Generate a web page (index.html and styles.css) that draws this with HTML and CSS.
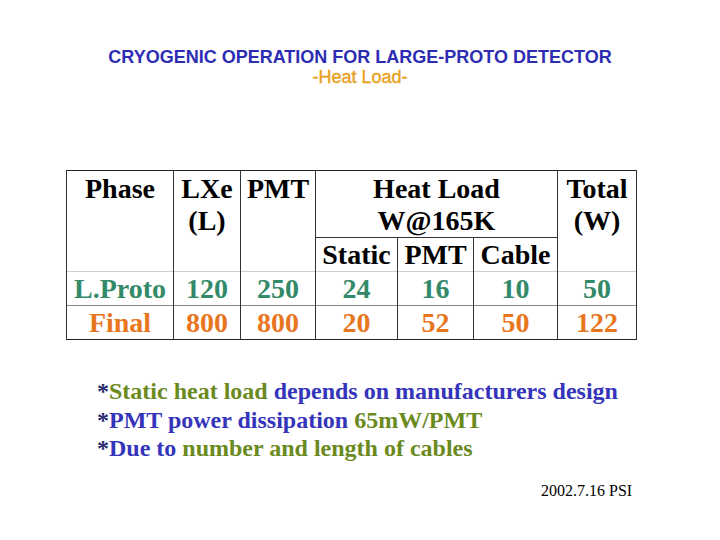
FILE: index.html
```html
<!DOCTYPE html>
<html>
<head>
<meta charset="utf-8">
<link rel="stylesheet" href="styles.css">
</head>
<body>
<div class="slide">
  <header class="title">
    <div class="title-main">CRYOGENIC OPERATION FOR LARGE-PROTO DETECTOR</div>
    <div class="title-sub">-Heat Load-</div>
  </header>
  <table class="load">
    <colgroup>
      <col class="c-phase"><col class="c-lxe"><col class="c-pmt"><col class="c-static"><col class="c-pmt2"><col class="c-cable"><col class="c-total">
    </colgroup>
    <tr class="head1">
      <th rowspan="2">Phase</th>
      <th rowspan="2">LXe<br>(L)</th>
      <th rowspan="2">PMT</th>
      <th colspan="3" class="heat">Heat Load<br>W@165K</th>
      <th rowspan="2">Total<br>(W)</th>
    </tr>
    <tr class="head2">
      <th>Static</th><th>PMT</th><th>Cable</th>
    </tr>
    <tr class="row proto">
      <td>L.Proto</td><td>120</td><td>250</td><td>24</td><td>16</td><td>10</td><td>50</td>
    </tr>
    <tr class="row final">
      <td>Final</td><td>800</td><td>800</td><td>20</td><td>52</td><td>50</td><td>122</td>
    </tr>
  </table>
  <div class="notes">
    <p><span class="star">*</span><span class="g">Static heat load</span> <span class="b">depends on manufacturers design</span></p>
    <p><span class="star">*</span><span class="b">PMT power dissipation</span> <span class="g">65mW/PMT</span></p>
    <p><span class="star">*</span><span class="b">Due to</span> <span class="g">number and length of cables</span></p>
  </div>
  <div class="date">2002.7.16 PSI</div>
</div>
</body>
</html>
```

FILE: styles.css
```css
html, body {
  margin: 0;
  padding: 0;
  background: #ffffff;
}
.slide {
  width: 720px;
  height: 540px;
  box-sizing: border-box;
  padding-top: 47px;
}
.title {
  text-align: center;
  font-family: "Liberation Sans", Arial, sans-serif;
  font-weight: bold;
}
.title-main {
  font-size: 18px;
  line-height: 20px;
  color: #2d2db4;
}
.title-sub {
  font-size: 18px;
  line-height: 20px;
  color: #e8a224;
  font-weight: normal;
  -webkit-text-stroke: 0.4px #e8a224;
  letter-spacing: 0;
}
.load {
  margin-top: 83px;
  margin-left: 66px;
  border-collapse: collapse;
  table-layout: fixed;
  width: 570px;
  font-family: "Liberation Serif", "Times New Roman", serif;
  font-weight: bold;
  font-size: 28px;
  border: 1px solid #222;
}
.c-phase { width: 107px; }
.c-lxe { width: 67px; }
.c-pmt { width: 75px; }
.c-static { width: 82px; }
.c-pmt2 { width: 76px; }
.c-cable { width: 84px; }
.c-total { width: 79px; }
.load th, .load td {
  border-left: 1px solid #333;
  border-right: 1px solid #333;
  padding: 0;
  text-align: center;
  line-height: 32px;
  color: #000;
  font-weight: bold;
}
.load th {
  vertical-align: top;
  padding-top: 2px;
}
.head1 { height: 67px; }
.head1 .heat {
  border-bottom: 1px solid #333;
}
.head2 { height: 34px; }
.head2 th {
  padding-top: 0;
  vertical-align: middle;
}
.row td {
  height: 33px;
  vertical-align: middle;
  white-space: nowrap;
}
.proto td {
  color: #338a68;
  border-top: 1px solid #cfcfcf;
}
.final td {
  color: #e8761e;
  border-top: 1px solid #888;
}
.notes {
  margin-top: 37px;
  margin-left: 97px;
  font-family: "Liberation Serif", "Times New Roman", serif;
  font-weight: bold;
  font-size: 24px;
  line-height: 28.5px;
  color: #3535bb;
}
.notes p {
  margin: 0;
  white-space: nowrap;
}
.notes .star { color: #2a2a6e; }
.notes .g { color: #6b8a1e; }
.notes .b { color: #3535bb; }
.date {
  margin-top: 19px;
  margin-left: 541px;
  font-family: "Liberation Serif", "Times New Roman", serif;
  font-size: 16px;
  line-height: 18px;
  color: #000;
}
```
